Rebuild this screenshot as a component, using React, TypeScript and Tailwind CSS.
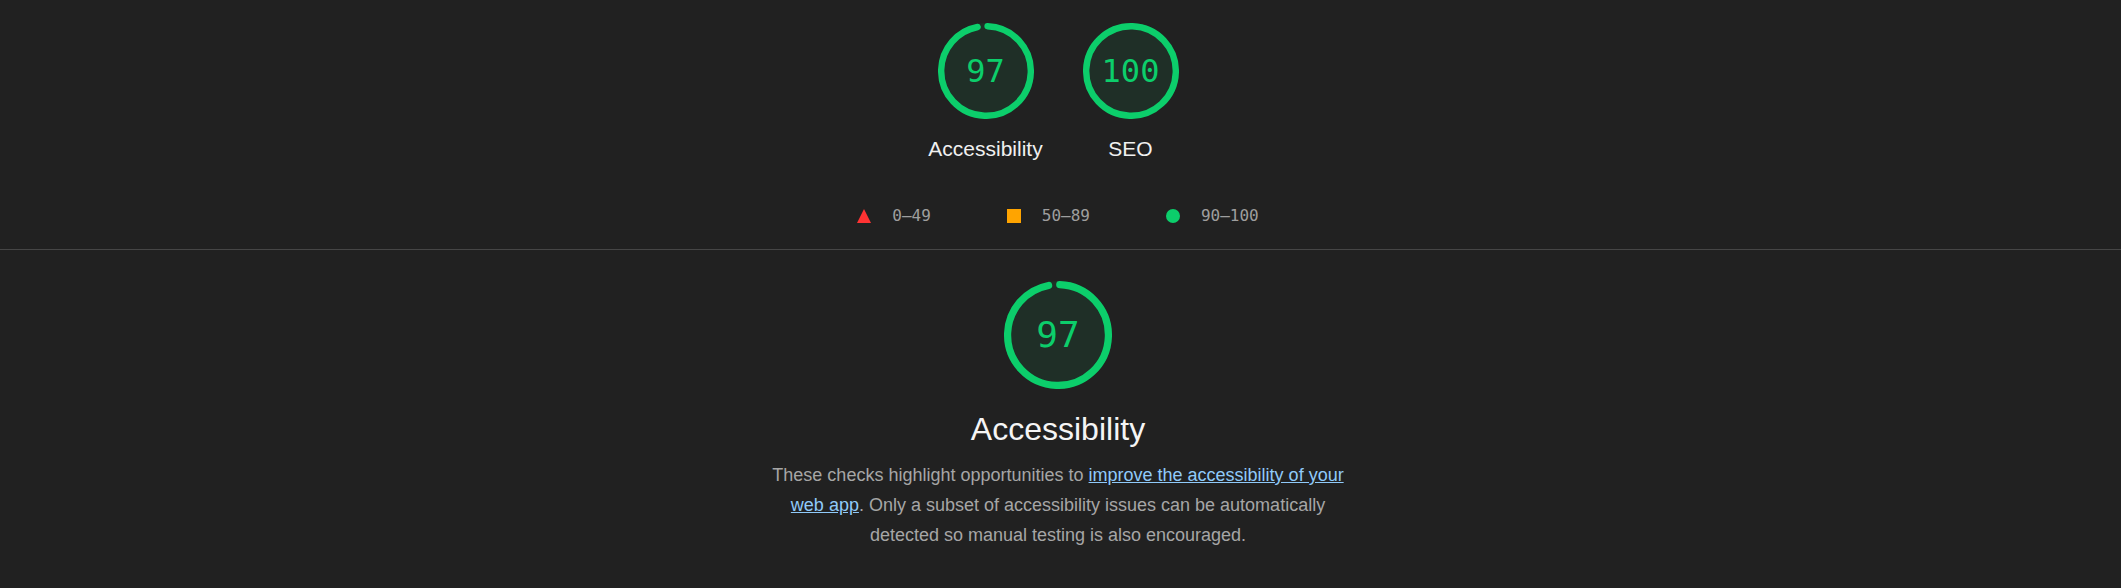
import React from "react";

const C = 2 * Math.PI * 56;

function Gauge({ score, size, fontSize }: { score: number; size: number; fontSize: string }) {
  const p = score / 100;
  const dash = p * C - 2.5;
  return (
    <div className="relative" style={{ width: size, height: size }}>
      <svg viewBox="0 0 120 120" width={size} height={size} className="block">
        <circle cx="60" cy="60" r="56" fill="#1f2f27" stroke="#1f2f27" strokeWidth="8" />
        <circle
          cx="60"
          cy="60"
          r="56"
          fill="none"
          stroke="#0cce6b"
          strokeWidth="8"
          strokeLinecap="round"
          strokeDasharray={`${dash} ${C}`}
          transform="rotate(-88 60 60)"
        />
      </svg>
      <div
        className={`absolute inset-0 flex items-center justify-center text-[#0cce6b] font-['DejaVu_Sans_Mono',monospace] ${fontSize}`}
      >
        {score}
      </div>
    </div>
  );
}

function ScoreItem({ score, label }: { score: number; label: string }) {
  return (
    <div className="w-[145px] flex flex-col items-center">
      <Gauge score={score} size={96} fontSize="text-[32px]" />
      <div className="mt-[19px] text-[21px] leading-[22px] text-[#f0f0f0]">{label}</div>
    </div>
  );
}

export default function App() {
  return (
    <div className="min-h-[588px] bg-[#212121] font-['Liberation_Sans',Arial,sans-serif]">
      <div className="flex flex-col items-center pt-[23px] pr-[5px]">
        <div className="flex">
          <ScoreItem score={97} label="Accessibility" />
          <ScoreItem score={100} label="SEO" />
        </div>
        <div className="mt-[46px] flex items-center gap-[76px] text-[16px] leading-[20px] text-[#9e9e9e] font-['DejaVu_Sans_Mono',monospace]">
          <div className="flex items-center gap-[21px]">
            <svg width="14" height="14" viewBox="0 0 14 14" className="block">
              <polygon points="7,0 14,14 0,14" fill="#f33" />
            </svg>
            <span>0–49</span>
          </div>
          <div className="flex items-center gap-[21px]">
            <div className="w-[14px] h-[14px] bg-[#ffa400]" />
            <span>50–89</span>
          </div>
          <div className="flex items-center gap-[21px]">
            <div className="w-[14px] h-[14px] rounded-full bg-[#0cce6b]" />
            <span>90–100</span>
          </div>
        </div>
      </div>
      <div className="mt-[23px] h-px bg-[#464646]" />
      <div className="flex flex-col items-center pt-[31px] pr-[5px]">
        <Gauge score={97} size={108} fontSize="text-[36px]" />
        <h2 className="mt-[21px] text-[32px] leading-[38px] text-[#f5f5f5]">Accessibility</h2>
        <p className="mt-[12px] max-w-[590px] text-center text-[18px] leading-[30px] text-[#a6a6a6]">
          These checks highlight opportunities to{" "}
          <a href="#" className="text-[#90caf9] underline">
            improve the accessibility of your web app
          </a>
          . Only a subset of accessibility issues can be automatically detected so manual testing is also
          encouraged.
        </p>
      </div>
    </div>
  );
}
